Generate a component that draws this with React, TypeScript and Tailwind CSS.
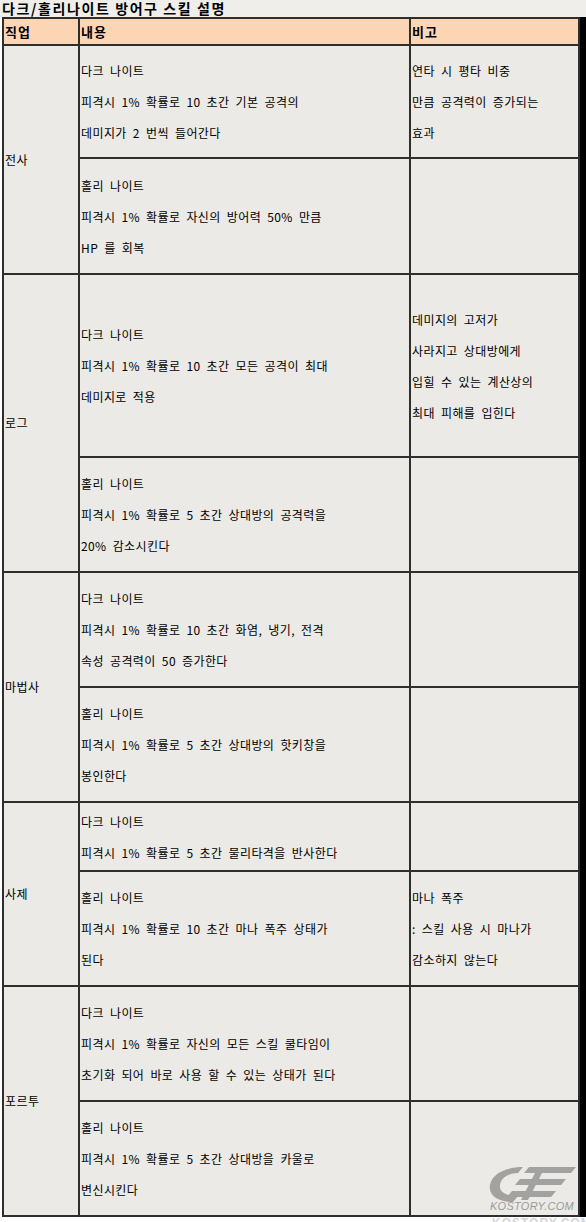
import React from 'react';

interface SubRow {
  h: number;
  content: string[];
  note: string[];
}

interface Group {
  job: string;
  rows: SubRow[];
}

const groups: Group[] = [
  {
    job: '전사',
    rows: [
      {
        h: 113,
        content: ['다크 나이트', '피격시 1% 확률로 10 초간 기본 공격의', '데미지가 2 번씩 들어간다'],
        note: ['연타 시 평타 비중', '만큼 공격력이 증가되는', '효과'],
      },
      {
        h: 116,
        content: ['홀리 나이트', '피격시 1% 확률로 자신의 방어력 50% 만큼', 'HP 를 회복'],
        note: [],
      },
    ],
  },
  {
    job: '로그',
    rows: [
      {
        h: 183,
        content: ['다크 나이트', '피격시 1% 확률로 10 초간 모든 공격이 최대', '데미지로 적용'],
        note: ['데미지의 고저가', '사라지고 상대방에게', '입힐 수 있는 계산상의', '최대 피해를 입힌다'],
      },
      {
        h: 115,
        content: ['홀리 나이트', '피격시 1% 확률로 5 초간 상대방의 공격력을', '20% 감소시킨다'],
        note: [],
      },
    ],
  },
  {
    job: '마법사',
    rows: [
      {
        h: 115,
        content: ['다크 나이트', '피격시 1% 확률로 10 초간 화염, 냉기, 전격', '속성 공격력이 50 증가한다'],
        note: [],
      },
      {
        h: 115,
        content: ['홀리 나이트', '피격시 1% 확률로 5 초간 상대방의 핫키창을', '봉인한다'],
        note: [],
      },
    ],
  },
  {
    job: '사제',
    rows: [
      {
        h: 69,
        content: ['다크 나이트', '피격시 1% 확률로 5 초간 물리타격을 반사한다'],
        note: [],
      },
      {
        h: 115,
        content: ['홀리 나이트', '피격시 1% 확률로 10 초간 마나 폭주 상태가', '된다'],
        note: ['마나 폭주', ': 스킬 사용 시 마나가', '감소하지 않는다'],
      },
    ],
  },
  {
    job: '포르투',
    rows: [
      {
        h: 115,
        content: ['다크 나이트', '피격시 1% 확률로 자신의 모든 스킬 쿨타임이', '초기화 되어 바로 사용 할 수 있는 상태가 된다'],
        note: [],
      },
      {
        h: 115,
        content: ['홀리 나이트', '피격시 1% 확률로 5 초간 상대방을 카울로', '변신시킨다'],
        note: [],
      },
    ],
  },
];

const font = { fontFamily: '"Noto Sans CJK KR", "Noto Sans", sans-serif' };

function Lines({ lines }: { lines: string[] }) {
  return (
    <>
      {lines.map((l, i) => (
        <div key={i} className="leading-[31px] whitespace-nowrap">
          {l}
        </div>
      ))}
    </>
  );
}

function Watermark() {
  return (
    <div className="absolute left-[486px] top-[1164px] w-[92px] flex flex-col items-center pointer-events-none">
      <svg width="90" height="40" viewBox="0 0 90 40">
        <g fill="#8a8a8a" opacity="0.75">
          {/* big C swoosh */}
          <path d="M36 3 C20 3 5 9 3 21 C1 32 12 38 26 38 L31 32 C19 32 12 28 13 21 C14 13 23 9 31 9 Z" />
          {/* speed stripes */}
          <path d="M42 3 L89 3 L84 9 L37 9 Z" />
          <path d="M33 15 L79 15 L74 21 L28 21 Z" />
          <path d="M25 27 L69 27 L64 33 L20 33 Z" />
          <path d="M48 9 L55 9 L41 36 L34 36 Z" />
        </g>
      </svg>
      <div className="text-[11px] italic leading-[11px] -mt-[3px] text-[#9a9a9a] tracking-[0.3px]" style={{ fontFamily: '"Liberation Sans", sans-serif' }}>
        KOSTORY.COM
      </div>
    </div>
  );
}

export default function App() {
  return (
    <div className="relative w-[586px] h-[1222px] bg-white overflow-hidden text-black" style={font}>
      {/* Title */}
      <div className="h-[17px] bg-[#efeeea] pl-[2px] text-[14px] font-bold leading-[17px] tracking-[1.6px] whitespace-nowrap">
        다크/홀리나이트 방어구 스킬 설명
      </div>

      <div className="flex">
        <table className="ml-[2px] w-[576px] table-fixed border-collapse bg-[#ebeae6] text-[12px] tracking-[0.4px] [word-spacing:3px]">
          <colgroup>
            <col className="w-[76px]" />
            <col className="w-[331px]" />
            <col className="w-[169px]" />
          </colgroup>
          <thead>
            <tr className="bg-[#fcd5b4]">
              <th className="h-[27px] border-2 border-[#2e2e2e] pl-[1px] text-left text-[13px] tracking-[1px] font-bold align-middle">직업</th>
              <th className="h-[27px] border-2 border-[#2e2e2e] pl-[1px] text-left text-[13px] tracking-[1px] font-bold align-middle">내용</th>
              <th className="h-[27px] border-2 border-[#2e2e2e] pl-[1px] text-left text-[13px] tracking-[1px] font-bold align-middle">비고</th>
            </tr>
          </thead>
          <tbody>
            {groups.map((g) =>
              g.rows.map((r, i) => (
                <tr key={g.job + i}>
                  {i === 0 && (
                    <td rowSpan={g.rows.length} className="border-2 border-[#2e2e2e] pl-[1px] align-middle whitespace-nowrap">
                      {g.job}
                    </td>
                  )}
                  <td className="border-2 border-[#2e2e2e] pl-[1px] align-middle p-0" style={{ height: r.h }}>
                    <Lines lines={r.content} />
                  </td>
                  <td className="border-2 border-[#2e2e2e] pl-[1px] align-middle p-0">
                    <Lines lines={r.note} />
                  </td>
                </tr>
              ))
            )}
          </tbody>
        </table>
        <div className="w-[8px] bg-black" />
      </div>

      <Watermark />
      <div className="absolute left-[492px] top-[1217px] text-[12px] font-bold tracking-[1px] leading-[12px] text-[#d4d4d4]" style={{ fontFamily: '"Liberation Sans", sans-serif' }}>
        KOSTORY.COM
      </div>
    </div>
  );
}
